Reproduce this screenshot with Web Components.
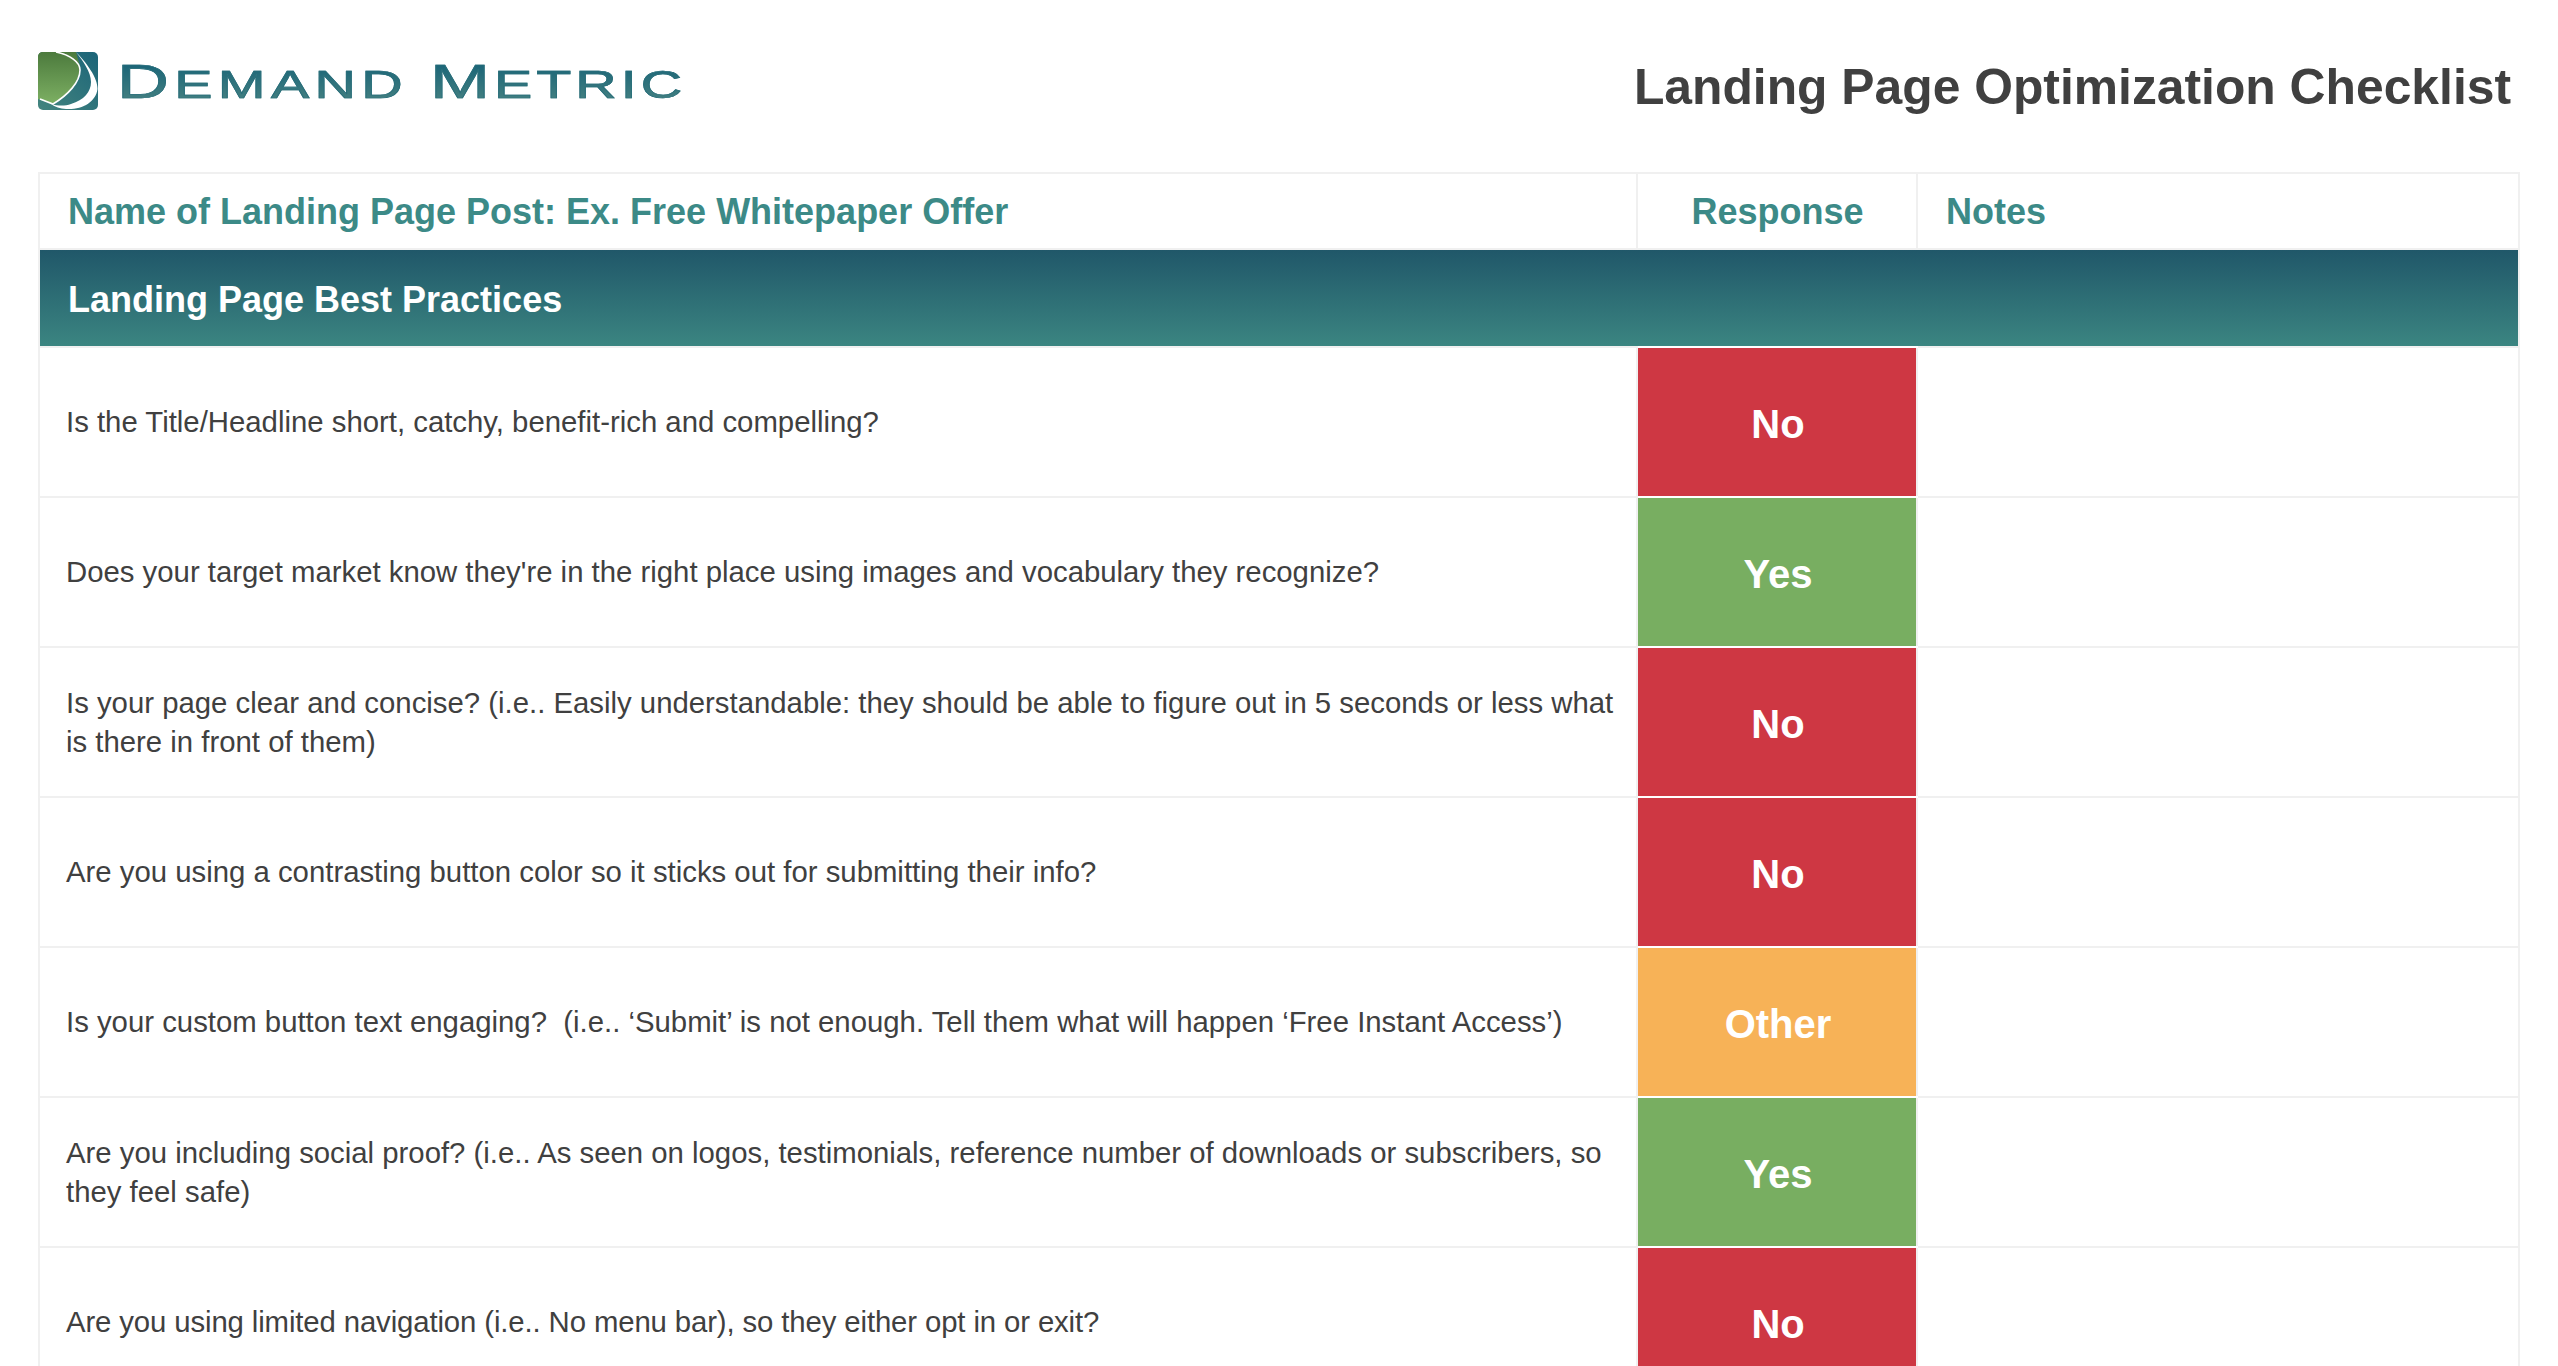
<!DOCTYPE html>
<html>
<head>
<meta charset="utf-8">
<title>Landing Page Optimization Checklist</title>
<style>
html, body { margin: 0; height: 100%; overflow: hidden; background: #fff; }
body {
  font-family: "Liberation Sans", Arial, sans-serif;
  color: #404040;
  padding: 0 38px;
}
</style>
</head>
<body>
<dm-header title-text="Landing Page Optimization Checklist"></dm-header>
<dm-checklist>
  <dm-row response="No">Is the Title/Headline short, catchy, benefit-rich and compelling?</dm-row>
  <dm-row response="Yes">Does your target market know they're in the right place using images and vocabulary they recognize?</dm-row>
  <dm-row response="No">Is your page clear and concise? (i.e.. Easily understandable: they should be able to figure out in 5 seconds or less what is there in front of them)</dm-row>
  <dm-row response="No">Are you using a contrasting button color so it sticks out for submitting their info?</dm-row>
  <dm-row response="Other">Is your custom button text engaging?&nbsp; (i.e.. ‘Submit’ is not enough. Tell them what will happen ‘Free Instant Access’)</dm-row>
  <dm-row response="Yes">Are you including social proof? (i.e.. As seen on logos, testimonials, reference number of downloads or subscribers, so they feel safe)</dm-row>
  <dm-row response="No" style="letter-spacing: -0.12px">Are you using limited navigation (i.e.. No menu bar), so they either opt in or exit?</dm-row>
</dm-checklist>

<script>
const logoTemplate = document.createElement('template');
logoTemplate.innerHTML = `
<style>
:host {
  display: flex;
  align-items: flex-start;
}
svg {
  width: 60px;
  height: 58px;
  display: block;
}
.word {
  margin-left: 19px;
  font-size: 49px;
  line-height: 58px;
  letter-spacing: 3.6px;
  white-space: nowrap;
  transform: scaleX(1.47);
  transform-origin: left center;
  background: linear-gradient(#1c6678 22%, #437f80 78%);
  -webkit-background-clip: text;
  background-clip: text;
  color: transparent;
  -webkit-text-stroke: 0.7px #2a6f7b;
}
.small { font-size: 39px; }
.gap { margin-left: 15px; }
.metric { letter-spacing: 2.75px; }
</style>
<svg viewBox="0 0 60 58">
  <defs>
    <linearGradient id="tealGrad" x1="1" y1="0" x2="0" y2="1">
      <stop offset="0" stop-color="#1b6478"/>
      <stop offset="1" stop-color="#44857f"/>
    </linearGradient>
    <linearGradient id="greenGrad" x1="0" y1="0" x2="0" y2="1">
      <stop offset="0" stop-color="#4c7a3d"/>
      <stop offset="1" stop-color="#7db063"/>
    </linearGradient>
  </defs>
  <rect width="60" height="58" rx="5" fill="url(#tealGrad)"/>
  <path d="M5 0H38L42 14C42 30 30 43 15 52L0 47V5Q0 0 5 0Z" fill="url(#greenGrad)"/>
  <path d="M18 0C32 3 42 10 42 18C42 30 30 43 15 52L2 47" fill="none" stroke="#fff" stroke-width="1.6"/>
  <path d="M38 0C48 10 60 26 59.5 37C58 50 44 58 28 57C22 56.5 17 55 13 52C20 54 27 54 33 52C46 48 53 40 53 30C53 20 45 9 38 0Z" fill="#fff"/>
</svg>
<span class="word">D<span class="small">EMAND</span><span class="gap metric">M</span><span class="small metric">ETRIC</span></span>`;

class DmLogo extends HTMLElement {
  constructor() {
    super();
    this.attachShadow({ mode: 'open' }).appendChild(logoTemplate.content.cloneNode(true));
  }
}
customElements.define('dm-logo', DmLogo);

const headerTemplate = document.createElement('template');
headerTemplate.innerHTML = `
<style>
:host {
  display: flex;
  justify-content: space-between;
  align-items: flex-start;
  height: 172px;
  box-sizing: border-box;
  padding-top: 52px;
}
h1 {
  margin: 5px 9px 0 0;
  font-size: 49.8px;
  line-height: 60px;
  font-weight: bold;
  color: #404040;
}
</style>
<dm-logo></dm-logo>
<h1></h1>`;

class DmHeader extends HTMLElement {
  constructor() {
    super();
    this.attachShadow({ mode: 'open' }).appendChild(headerTemplate.content.cloneNode(true));
  }

  connectedCallback() {
    this.shadowRoot.querySelector('h1').textContent = this.getAttribute('title-text');
  }
}
customElements.define('dm-header', DmHeader);

const checklistTemplate = document.createElement('template');
checklistTemplate.innerHTML = `
<style>
:host {
  display: block;
  width: 2482px;
  box-sizing: border-box;
  border: 2px solid #f0f0f0;
  border-bottom: 0;
}
.head {
  display: grid;
  grid-template-columns: 1598px 280px 1fr;
  height: 74px;
  font-size: 36px;
  font-weight: bold;
  color: #3c8a87;
  border-bottom: 2px solid #f0f0f0;
}
.head div {
  display: flex;
  align-items: center;
  padding: 2px 0 0 28px;
}
.head .q { border-right: 2px solid #f0f0f0; }
.head .r { border-right: 2px solid #f0f0f0; justify-content: center; padding-left: 1px; }
.banner {
  height: 93px;
  padding-top: 3px;
  display: flex;
  align-items: center;
  padding-left: 28px;
  font-size: 36px;
  font-weight: bold;
  color: #fff;
  background: linear-gradient(#205769, #3b8581);
  border-bottom: 2px solid #f0f0f0;
}
</style>
<div class="head">
  <div class="q">Name of Landing Page Post: Ex. Free Whitepaper Offer</div>
  <div class="r">Response</div>
  <div>Notes</div>
</div>
<div class="banner">Landing Page Best Practices</div>
<slot></slot>`;

class DmChecklist extends HTMLElement {
  constructor() {
    super();
    this.attachShadow({ mode: 'open' }).appendChild(checklistTemplate.content.cloneNode(true));
  }
}
customElements.define('dm-checklist', DmChecklist);

const rowTemplate = document.createElement('template');
rowTemplate.innerHTML = `
<style>
:host {
  display: grid;
  grid-template-columns: 1598px 280px 1fr;
  height: 150px;
}
.question {
  display: flex;
  align-items: center;
  box-sizing: border-box;
  padding: 0 20px 1px 26px;
  font-size: 29.33px;
  line-height: 39px;
  color: #404040;
  border-right: 2px solid #f0f0f0;
  border-bottom: 2px solid #f0f0f0;
}
.response {
  display: flex;
  align-items: center;
  justify-content: center;
  padding: 4px 0 0 2px;
  font-size: 40px;
  font-weight: bold;
  color: #fff;
  border-right: 2px solid #f0f0f0;
  border-bottom: 2px solid #fff;
  box-shadow: 0 -2px 0 #fff;
}
.notes { border-bottom: 2px solid #f0f0f0; }
:host([response="No"]) .response { background: #ce3743 padding-box; }
:host([response="Yes"]) .response { background: #78ae61 padding-box; }
:host([response="Other"]) .response { background: #f7b257 padding-box; }
</style>
<div class="question"><slot></slot></div>
<div class="response"></div>
<div class="notes"></div>`;

class DmRow extends HTMLElement {
  constructor() {
    super();
    this.attachShadow({ mode: 'open' }).appendChild(rowTemplate.content.cloneNode(true));
  }

  connectedCallback() {
    this.shadowRoot.querySelector('.response').textContent = this.getAttribute('response');
  }
}
customElements.define('dm-row', DmRow);
</script>
</body>
</html>
